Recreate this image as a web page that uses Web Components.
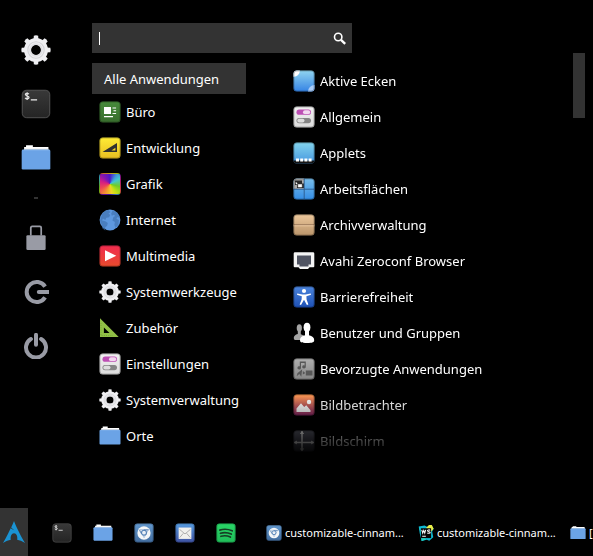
<!DOCTYPE html>
<html lang="de">
<head>
<meta charset="utf-8">
<title>Anwendungsmenü</title>
<style>
  html { background: #000; }
  body { margin: 0; background: #000; color: #fff; font-family: "Noto Sans", "Open Sans", sans-serif; font-size: 13px; overflow: hidden; }
</style>
</head>
<body>
<desktop-screen></desktop-screen>
<script>
const grad = (id, a, b) => `<linearGradient id="${id}" x1="0" y1="0" x2="0" y2="1"><stop offset="0" stop-color="${a}"/><stop offset="1" stop-color="${b}"/></linearGradient>`;
const tile = (a, b, inner = '') => `<defs>${grad('t', a, b)}<clipPath id="c"><rect x=".5" y=".5" width="21" height="21" rx="3.5"/></clipPath></defs><rect x=".5" y=".5" width="21" height="21" rx="3.5" fill="url(#t)"/><g clip-path="url(#c)">${inner}</g><rect x="1" y="1" width="20" height="20" rx="3" fill="none" stroke="#000" stroke-opacity=".22"/>`;
const teeth = [0, 45, 90, 135, 180, 225, 270, 315].map(a => `<path d="M9.2 5 9.4.5Q11 0 12.6.5L12.8 5Z" transform="rotate(${a} 11 11)"/>`).join('');
const chromium = `<circle cx="11" cy="11" r="7.3" fill="#f4f6f8"/><path d="M6.2 7.2h9.8l-4.9 9Z" fill="#dfe8f2" stroke="#9db8d6" stroke-width=".8" stroke-linejoin="round"/><circle cx="11" cy="10.6" r="2.7" fill="#e9eff6" stroke="#527fb4" stroke-width="1.2"/><path d="M11 7.6h5M8.3 12 6 7.9" stroke="#527fb4" stroke-width=".9" fill="none"/>`;
const ICONS = {
  gear: `<g fill="#efeff2">${teeth}</g><circle cx="11" cy="11" r="6.3" fill="none" stroke="#efeff2" stroke-width="5"/><circle cx="11" cy="11" r="6" fill="none" stroke="#d3d3d7" stroke-width=".8"/><circle cx="11" cy="11" r="4.3" fill="none" stroke="#dedee2" stroke-width="1.4"/>`,
  terminal: tile('#393939', '#242424', `<path d="M7.2 8h4.6" stroke="#eee" stroke-width=".9"/><path d="M5.8 3.7C5.1 2.9 3.2 3 3.2 4.1s2.7.7 2.7 2-2.1 1.5-2.9.4M4.5 2.3v5.8" fill="none" stroke="#e4e4e4" stroke-width=".9"/>`) + `<rect x="1" y="1" width="20" height="20" rx="3.2" fill="none" stroke="#505050" stroke-width=".7"/>`,
  folder: `<path d="M2.3 6.2V2.9h1.4V1.6h5v1.3h11.4v3.3Z" fill="#fff"/><path d="M2.3 4.2h17.8v1.5H2.3Z" fill="#d8d8d8"/><rect x=".5" y="4.9" width="21" height="14.5" rx=".9" fill="#6ba3e6"/><path d="M1 5.2h20" stroke="#86b5ec" stroke-width=".6"/>`,
  lock: `<path d="M5.6 11V2.9Q5.6 1.5 7 1.5h8q1.4 0 1.4 1.4V11" fill="none" stroke="#999ba5" stroke-width="1.8"/><rect x="1" y="10.6" width="20" height="15.4" rx="1.3" fill="#999ba5"/>`,
  logout: `<path d="M22.1 7.6A10 10 0 1 0 22.1 18.4" fill="none" stroke="#999ba5" stroke-width="4"/><path d="M15.8 13H25.3" stroke="#999ba5" stroke-width="4" stroke-linecap="round"/>`,
  power: `<path d="M7.9 6A10 10 0 1 0 18.1 6" fill="none" stroke="#999ba5" stroke-width="4" stroke-linecap="round"/><path d="M13 1.8V11.8" stroke="#999ba5" stroke-width="4" stroke-linecap="round"/>`,
  search: `<circle cx="5.2" cy="5" r="3.7" fill="none" stroke="#fff" stroke-width="1.6"/><path d="m8 7.8 4.2 4" stroke="#fff" stroke-width="2.4"/>`,
  office: tile('#478b3b', '#386d2d', `<path d="M5 6h7v7H5ZM5 15h9v1.2H5ZM13.5 6.5h3.6v1h-3.6zM14.5 9.2h2.6v1h-2.6zM13.5 12h3.6v1h-3.6z" fill="#fff"/>`),
  code: tile('#ffec35', '#e8bd21', `<path fill-rule="evenodd" d="M3.5 15 18 6v9ZM12.4 13.5h4v-2.8Z" fill="#303030"/>`),
  internet: `<circle cx="11" cy="11" r="10.4" fill="#5e98df"/><path d="M3 5.2C5 2.5 7 1.4 9.3 1l2.2 2-2 1.6 1.7 1.3-1.1 2.4-2.8.5-1 2.1-2.4-1.3-.8 1.8 3.2.8 2.5 1.8-.7 2.7-2 1.9.2 3-2.8-2-1.1-4.5-1.4-3.4ZM13.8 1.3 18.8 4.3 21 9l-2.4-.9-1.2 1.6 2.5 1.3-.5 4.7-2.8 3.4-1.2-3.1.5-2.9-2.5-1.6 1-3.4 1.8-1-1.4-1.3-2 1-.6-2.2Z" fill="#3e70ad" opacity=".65"/>`,
  media: tile('#f12c50', '#e84a2c', `<path d="m6 5.3 11.3 5.4L6 16.2Z" fill="#fff"/>`),
  ruler: `<path fill-rule="evenodd" d="M1 1.3 19.7 20H1ZM4.9 10.5v5.6h5.6Z" fill="#91bf46"/><path d="M2 6v12.5h12" fill="none" stroke="#699430" stroke-width=".7" stroke-dasharray=".8 1.4"/>`,
  toggles: tile('#f1f1f1', '#dcdcdc', `<rect x="3.5" y="3.6" width="14.5" height="5.2" rx="2.6" fill="#bd4fb4"/><rect x="10" y="4.3" width="7.2" height="3.8" rx="1.9" fill="#f3d9f0"/><rect x="3.5" y="12" width="14.5" height="5.2" rx="2.6" fill="#858585"/><rect x="4.3" y="12.7" width="7.2" height="3.8" rx="1.9" fill="#ddd"/>`),
  corners: tile('#91d5f0', '#3583e4', `<circle cx="1" cy="1" r="5.8" fill="#fff"/><circle cx="21.5" cy="21.5" r="6.5" fill="#a9cdfa"/>`),
  applets: tile('#83d4ed', '#4596df', `<path d="M0 18.5h22V22H0Z" fill="#191919"/><path d="M3 16.5h3v3H3zm4.2 0h3v3h-3zm4.2 0h3v3h-3zm4.2 0h3v3h-3z" fill="#fff"/>`),
  spaces: tile('#78bdea', '#348de5', `<path d="M0 0h11v11H0Z" fill="#aaa"/><path d="M2 2.5h7v3h2V10H4V7H2Z" fill="#292929"/><path d="M3 4v2h1.5M5.2 6.5h3.6V9H5.2z" fill="#fff" stroke="#fff" stroke-width=".5"/><path d="M11.2 0v22M0 11.2h22" stroke="#2b598b" stroke-width=".9"/>`),
  archive: tile('#edc89c', '#b9946a', `<path d="M0 10.8h22" stroke="#967457" stroke-width="1"/><path d="M0 11.8h22" stroke="#f1d0a9" stroke-width=".8"/>`),
  network: `<path d="M2 2.2h18q1.3 0 1.3 1.3v12.7q0 1-1 1h-3.8L15 19H7l-1.5-1.8H1.7q-1 0-1-1V3.5Q.7 2.2 2 2.2Z" fill="#f4f4f4"/><path d="M4 5.5h14v9h-2.5v2h-9v-2H4Z" fill="#505462"/>`,
  access: tile('#4b84dc', '#1d50b5', `<circle cx="11" cy="5" r="2.1" fill="#fff"/><path d="M4.2 7.4 9.5 8.4h3l5.3-1 .2 1.3-4.6 1.6.2 3.2 1.8 5-1.5.5-2.9-5.2L8 19l-1.4-.5 2-5 .2-3.2-4.8-1.6Z" fill="#fff"/>`),
  users: `<g fill="#a4a4a4"><ellipse cx="6.3" cy="6" rx="2.6" ry="3.8"/><path d="M4.8 9h3v3.2l3 1.2V18H2Q.5 18 .8 15.6 1 13 4.8 12Z"/></g><g fill="#fff"><ellipse cx="14" cy="5.2" rx="3.4" ry="4.5"/><path d="M12 9h4v4.2c3.2.8 5.2 2 5.2 4.8 0 2.2-1.5 3-7.2 3s-7-.8-7-3c0-2.8 1.8-4 5-4.8Z"/></g>`,
  prefs: tile('#b0b0b0', '#868686', `<g fill="#575757"><path d="M6.8 3.5h6v5.3a1.8 1.6 0 1 1-1.2-1.4V5H8v4.9A1.8 1.6 0 1 1 6.8 8.3Z"/><path d="m9.2 11.2-.9 7.6-2-2.7-2.6 2.2.7-3Z"/><path d="M12.8 12.5h6.7v5h-6.7zM11.8 14.5l-2-1.4v3.5l2-1.2Z"/></g>`),
  image: tile('#ff9a52', '#8f2a69', `<path d="M3.5 18v-3.5L8 9.3l3.2 3.8 2.1-1.8 4.2 5V18Z" fill="#fff"/><circle cx="16" cy="8" r="2.2" fill="#fff"/>`),
  display: tile('#5a5b68', '#3c3d4a', `<path d="M9 1v20M1 12.5h20" fill="none" stroke="#fff" stroke-width="1.5"/><path d="M6.8 4 9 1l2.2 3ZM6.8 18.5 9 21.5l2.2-3ZM3.8 10.4 1 12.5l2.8 2.1ZM18.2 10.4l2.8 2.1-2.8 2.1Z" fill="#fff"/>`),
  chromium: tile('#6298ce', '#426d9f', chromium),
  mail: tile('#579ce0', '#3e51a2', `<rect x="4" y="5" width="14" height="12.5" fill="#f0f0ed"/><path d="m5 7 6 5 6-5M5.2 16l4-4.7M16.8 16l-4-4.7" fill="none" stroke="#aaa" stroke-width="1"/>`),
  music: tile('#29d667', '#20bd59', `<path d="M4.2 7.8Q11 5.6 17.8 8.6M4.9 11.3Q11 9.5 16.8 12.2M5.4 14.6Q11 13.1 15.8 15.5" stroke="#173e25" stroke-width="1.9" stroke-linecap="round" fill="none"/>`),
  webstorm: `<path d="M1 2 9 .8l4 2L18 0l3.5 5-2 4 1.5 8-5.5 4.7-3.5-1.5L5 22 2.5 12Z" fill="#10b9d2"/><path d="M11 4 15 0h4l2.5 5L18 9Z" fill="#e9ed47"/><path d="M1 2 4.5 14 5 22l6-2-6-8Z" fill="#20d6c1"/><rect x="4" y="4.5" width="14" height="13.5" fill="#050505"/><path d="m5.2 6.6 1.3 4.6 1.4-3.8 1.4 3.8 1.2-4.6M16.6 7.5c-.8-1.2-3.6-1-3.6.5 0 1.6 3.8.8 3.8 2.4 0 1.3-2.8 1.5-4 .3M5.8 15.4h5" fill="none" stroke="#fff" stroke-width="1.4"/>`,
  arch: `<path d="M11 0C10 2.4 9.4 4 8.2 6.5c.8.8 1.7 1.7 3.1 2.8-1.6-.6-2.7-1.2-3.6-2C6.1 10.6 3.8 15.5 0 22c3-1.7 5.4-2.8 7.8-3.2-.6-3.4.7-6.6 3.2-6.6s3.8 3.2 3.2 6.6c2.4.4 4.8 1.5 7.8 3.2C17 13.6 14.3 8 11 0Z" fill="#1a93d3"/>`
};
const BOX = { lock: '0 0 22 27', logout: '0 0 26 26', power: '0 0 26 26', search: '0 0 13 13' };

class AppIcon extends HTMLElement {
  connectedCallback() {
    const name = this.getAttribute('name');
    const style = `<style>:host{display:block;flex:none;width:var(--icon,22px);height:var(--icon,22px)}svg{display:block;width:100%;height:100%}.wheel{box-sizing:border-box;width:100%;height:100%;border:1px solid #0003;border-radius:4px;background:conic-gradient(#4c18c8,#419bdb 38deg,#42c8d0 60deg,#70cc28 105deg,#c5e015 145deg,#f0d426 170deg,#f49b30 205deg,#ee4656 245deg,#d41d83 285deg,#8316b1 320deg,#4c18c8)}</style>`;
    this.attachShadow({ mode: 'open' }).innerHTML = style + (name === 'palette' ? '<div class="wheel"></div>' : `<svg viewBox="${BOX[name] || '0 0 22 22'}" aria-hidden="true">${ICONS[name]}</svg>`);
  }
}
customElements.define('app-icon', AppIcon);

class MenuItem extends HTMLElement {
  connectedCallback() {
    const icon = this.getAttribute('icon');
    this.attachShadow({ mode: 'open' }).innerHTML = `<style>
      :host{display:block}
      button{all:unset;box-sizing:border-box;display:flex;align-items:center;gap:5px;width:100%;height:36px;padding:0 7px;font:inherit;line-height:20px;white-space:nowrap}
      :host([selected]) button{height:31px;padding:0 12px;background:#333}
    </style><button type="button">${icon ? `<app-icon name="${icon}"></app-icon>` : ''}<span><slot></slot></span></button>`;
  }
}
customElements.define('menu-item', MenuItem);

class IconButton extends HTMLElement {
  connectedCallback() {
    this.attachShadow({ mode: 'open' }).innerHTML = `<style>
      :host{display:block;flex:none}
      button{all:unset;display:grid;place-items:center;width:100%;height:100%}
    </style><button type="button" aria-label="${this.getAttribute('label')}"><app-icon name="${this.getAttribute('icon')}"></app-icon></button>`;
  }
}
customElements.define('icon-button', IconButton);

class FavoritesBar extends HTMLElement {
  connectedCallback() {
    this.attachShadow({ mode: 'open' }).innerHTML = `<style>
      :host{display:flex;flex-direction:column;align-items:center;padding-top:23px;--icon:30px}
      icon-button{width:54px;height:54px}
      .system{--icon:26px}
      hr{width:4px;height:2px;margin:12px 0;border:0;background:#333}
    </style>
    <icon-button icon="gear" label="Systemeinstellungen"></icon-button>
    <icon-button icon="terminal" label="Terminal"></icon-button>
    <icon-button icon="folder" label="Dateien"></icon-button>
    <hr>
    <icon-button class="system" icon="lock" label="Bildschirm sperren"></icon-button>
    <icon-button class="system" icon="logout" label="Abmelden"></icon-button>
    <icon-button class="system" icon="power" label="Herunterfahren"></icon-button>`;
  }
}
customElements.define('favorites-bar', FavoritesBar);

class SearchField extends HTMLElement {
  connectedCallback() {
    this.attachShadow({ mode: 'open' }).innerHTML = `<style>
      :host{display:block;--icon:13px}
      label{display:flex;align-items:center;box-sizing:border-box;height:30px;padding:0 6px 0 7px;background:#333}
      i{width:1px;height:13px;background:#fff}
      input{all:unset;flex:1;min-width:0;font:inherit;caret-color:transparent}
    </style><label><i></i><input type="text" aria-label="Suchen"><app-icon name="search"></app-icon></label>`;
  }
}
customElements.define('search-field', SearchField);

const items = list => list.map(([icon, text]) => `<menu-item icon="${icon}">${text}</menu-item>`).join('');

class CategoryList extends HTMLElement {
  connectedCallback() {
    this.attachShadow({ mode: 'open' }).innerHTML = `<style>:host{display:block}</style><menu-item selected>Alle Anwendungen</menu-item>` + items([
      ['office', 'Büro'], ['code', 'Entwicklung'], ['palette', 'Grafik'], ['internet', 'Internet'], ['media', 'Multimedia'],
      ['gear', 'Systemwerkzeuge'], ['ruler', 'Zubehör'], ['toggles', 'Einstellungen'], ['gear', 'Systemverwaltung'], ['folder', 'Orte']]);
  }
}
customElements.define('category-list', CategoryList);

class ApplicationList extends HTMLElement {
  connectedCallback() {
    this.attachShadow({ mode: 'open' }).innerHTML = `<style>
      :host{display:flex;justify-content:space-between}
      .list{flex:1;min-width:0;padding-top:10px;-webkit-mask-image:linear-gradient(#000 calc(100% - 64px),transparent);mask-image:linear-gradient(#000 calc(100% - 64px),transparent)}
      .thumb{flex:none;width:12px;height:65px;background:#333}
    </style><div class="list">${items([
      ['corners', 'Aktive Ecken'], ['toggles', 'Allgemein'], ['applets', 'Applets'], ['spaces', 'Arbeitsflächen'], ['archive', 'Archivverwaltung'],
      ['network', 'Avahi Zeroconf Browser'], ['access', 'Barrierefreiheit'], ['users', 'Benutzer und Gruppen'], ['prefs', 'Bevorzugte Anwendungen'],
      ['image', 'Bildbetrachter'], ['display', 'Bildschirm']])}</div><div class="thumb"></div>`;
  }
}
customElements.define('application-list', ApplicationList);

class TaskButton extends HTMLElement {
  connectedCallback() {
    this.attachShadow({ mode: 'open' }).innerHTML = `<style>
      :host{display:block;flex:none;width:152px;--icon:16px}
      button{all:unset;display:flex;align-items:center;gap:3px;width:100%;height:100%;font:inherit;font-size:11px;line-height:16px;white-space:nowrap}
    </style><button type="button"><app-icon name="${this.getAttribute('icon')}"></app-icon><span><slot></slot></span></button>`;
  }
}
customElements.define('task-button', TaskButton);

class TaskBar extends HTMLElement {
  connectedCallback() {
    this.attachShadow({ mode: 'open' }).innerHTML = `<style>
      :host{display:flex;height:48px;overflow:hidden}
      .start{width:28px;background:#333;--icon:22px}
      nav,.windows{display:flex;padding-top:2px}
      nav{margin:0 20px 0 13px;--icon:20px}
      nav icon-button{width:41px}
      .windows{flex:1;min-width:0}
    </style>
    <icon-button class="start" icon="arch" label="Menü"></icon-button>
    <nav><icon-button icon="terminal" label="Terminal"></icon-button><icon-button icon="folder" label="Dateien"></icon-button><icon-button icon="chromium" label="Chromium"></icon-button><icon-button icon="mail" label="E-Mail"></icon-button><icon-button icon="music" label="Musik"></icon-button></nav>
    <div class="windows"><task-button icon="chromium">customizable-cinnam...</task-button><task-button icon="webstorm">customizable-cinnam...</task-button><task-button icon="folder">[</task-button></div>`;
  }
}
customElements.define('task-bar', TaskBar);

class DesktopScreen extends HTMLElement {
  connectedCallback() {
    this.attachShadow({ mode: 'open' }).innerHTML = `<style>
      :host{display:flex;flex-direction:column;justify-content:space-between;min-height:100vh}
      main{display:grid;grid-template-columns:72px minmax(0,1fr);gap:20px;padding-right:8px}
      .menu{padding-top:23px}
      search-field{width:260px;max-width:100%}
      .lists{display:grid;grid-template-columns:154px minmax(0,1fr);gap:40px}
      category-list{padding-top:10px}
    </style>
    <main><favorites-bar></favorites-bar><div class="menu"><search-field></search-field><div class="lists"><category-list></category-list><application-list></application-list></div></div></main>
    <task-bar></task-bar>`;
  }
}
customElements.define('desktop-screen', DesktopScreen);
</script>
</body>
</html>
